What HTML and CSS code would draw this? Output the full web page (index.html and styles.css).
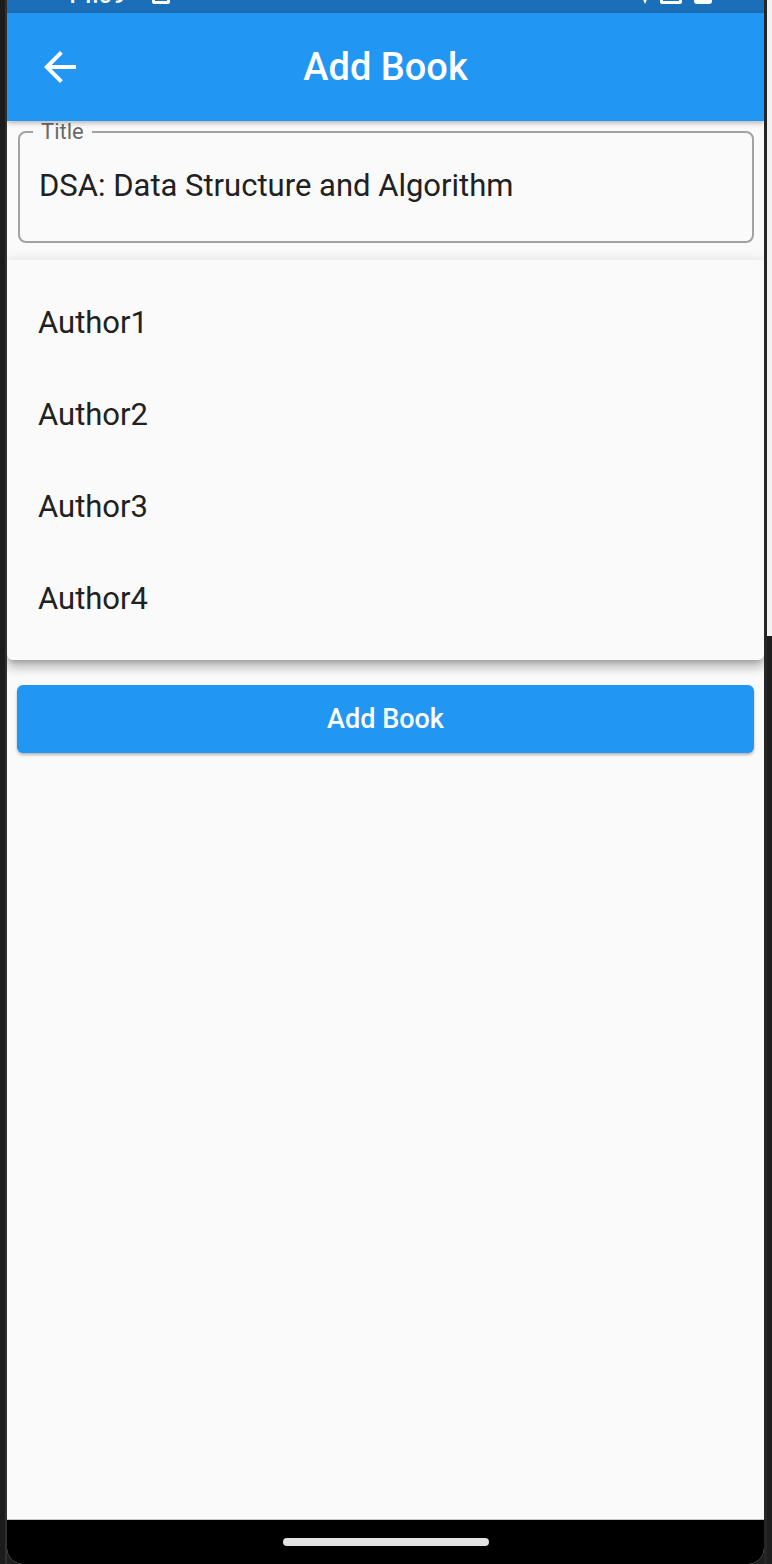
FILE: index.html
```html
<!DOCTYPE html>
<html lang="en">
<head>
<meta charset="utf-8">
<title>Add Book</title>
<link rel="stylesheet" href="styles.css">
</head>
<body>
<div class="device">
  <div class="bezel-left"></div>
  <div class="screen">
    <div class="status">
      <div class="status-row">
        <span class="time">14:09</span>
        <span class="notif"></span>
        <span class="status-spacer"></span>
        <span class="wifi"></span>
        <span class="signal"></span>
        <span class="battery"></span>
      </div>
    </div>
    <header class="appbar">
      <button class="back" aria-label="Back">
        <svg viewBox="0 0 24 24" width="48" height="48"><path fill="#fff" d="M20 11H7.83l5.59-5.59L12 4l-8 8 8 8 1.41-1.41L7.83 13H20v-2z"/></svg>
      </button>
      <h1 class="title">Add Book</h1>
      <span class="appbar-spacer"></span>
    </header>
    <main class="content">
      <fieldset class="field">
        <legend class="field-label">Title</legend>
        <div class="field-value">DSA: Data Structure and Algorithm</div>
      </fieldset>
      <button class="primary">Add Book</button>
      <ul class="menu">
        <li class="menu-item">Author1</li>
        <li class="menu-item">Author2</li>
        <li class="menu-item">Author3</li>
        <li class="menu-item">Author4</li>
      </ul>
    </main>
    <div class="navbar"><span class="pill"></span></div>
  </div>
  <div class="bezel-right">
    <div class="edge"></div>
    <div class="side">
      <div class="side-light"></div>
      <div class="side-dark"></div>
    </div>
  </div>
</div>
</body>
</html>
```
FILE: styles.css
```css
* { box-sizing: border-box; }
html, body {
  margin: 0;
  padding: 0;
  width: 772px;
  height: 1564px;
  overflow: hidden;
  background: #1e1e1e;
  font-family: Roboto, "Noto Sans", Arial, sans-serif;
}
.device {
  display: flex;
  height: 1564px;
}
.bezel-left {
  width: 7px;
  background: #1c1c1c;
  border-right: 2px solid #303030;
}
.screen {
  width: 757px;
  display: flex;
  flex-direction: column;
  background: #fafafa;
  border-radius: 0 0 16px 16px;
  overflow: hidden;
}
.bezel-right {
  width: 8px;
  display: flex;
}
.edge {
  width: 3px;
  background: #262626;
}
.side {
  flex: 1;
  display: flex;
  flex-direction: column;
}
.side-light {
  height: 636px;
  background: #f2f2f2;
}
.side-dark {
  flex: 1;
  background: #1e1e1e;
}

/* status bar */
.status {
  height: 13px;
  background: #1b6fb8;
  overflow: hidden;
}
.status-row {
  display: flex;
  align-items: flex-end;
  height: 18px;
  margin-top: -14px;
  padding: 0 52px 0 58px;
  color: #fff;
}
.time {
  font-size: 24px;
  line-height: 18px;
  font-weight: 500;
}
.notif {
  width: 18px;
  height: 16px;
  margin-left: 26px;
  border: 3px solid #fff;
  border-radius: 2px;
}
.status-spacer { flex: 1; }
.wifi {
  width: 0;
  height: 0;
  border-left: 7px solid transparent;
  border-right: 7px solid transparent;
  border-top: 16px solid #fff;
}
.signal {
  width: 22px;
  height: 18px;
  margin-left: 8px;
  border: 3px solid #fff;
  border-radius: 2px;
}
.battery {
  width: 18px;
  height: 18px;
  margin-left: 12px;
  background: #fff;
  border-radius: 3px;
}

/* app bar */
.appbar {
  height: 108px;
  background: #2196f3;
  display: grid;
  grid-template-columns: 1fr auto 1fr;
  align-items: center;
  box-shadow: 0 2px 5px rgba(0, 0, 0, 0.28);
  position: relative;
  z-index: 2;
}
.back {
  justify-self: start;
  margin-left: 29px;
  width: 48px;
  height: 48px;
  padding: 0;
  border: 0;
  background: transparent;
  display: flex;
}
.title {
  margin: 0;
  color: #fff;
  font-size: 38px;
  font-weight: 500;
  line-height: 50px;
}

/* content */
.content {
  flex: 1;
  position: relative;
  padding: 0 10px;
  display: flex;
  flex-direction: column;
  align-items: stretch;
}
.field {
  margin: 0 0 0 1px;
  padding: 0 0 35px 13px;
  border: 2px solid #a2a2a2;
  border-radius: 8px;
  min-width: 0;
}
.field-label {
  padding: 0 8px;
  font-size: 22px;
  line-height: 22px;
  color: #6a6a6a;
}
.field-value {
  margin: 23px 0 0 6px;
  font-size: 31px;
  line-height: 40px;
  height: 40px;
  color: #212121;
  white-space: nowrap;
}
.primary {
  margin-top: 442px;
  height: 68px;
  border: 0;
  border-radius: 6px;
  background: #2196f3;
  color: #fff;
  font-family: Roboto, "Noto Sans", Arial, sans-serif;
  font-size: 27px;
  font-weight: 500;
  box-shadow: 0 2px 3px rgba(0, 0, 0, 0.28);
}

/* dropdown menu overlay */
.menu {
  position: absolute;
  top: 139px;
  left: 0;
  right: 0;
  margin: 0;
  padding: 16px 0;
  list-style: none;
  background: #fafafa;
  border-radius: 0 0 6px 6px;
  box-shadow: 0 5px 5px -3px rgba(0, 0, 0, 0.2), 0 8px 10px 1px rgba(0, 0, 0, 0.14), 0 3px 14px 2px rgba(0, 0, 0, 0.12);
  z-index: 3;
}
.menu-item {
  height: 92px;
  display: flex;
  align-items: center;
  padding-left: 31px;
  padding-top: 1px;
  font-size: 31px;
  color: #212121;
}

/* nav bar */
.navbar {
  height: 45px;
  background: #000;
  border-top: 1px solid #c4c4c4;
  display: flex;
  justify-content: center;
  padding-top: 18px;
}
.pill {
  width: 206px;
  height: 8px;
  border-radius: 4px;
  background: #e4e4e4;
}
```
